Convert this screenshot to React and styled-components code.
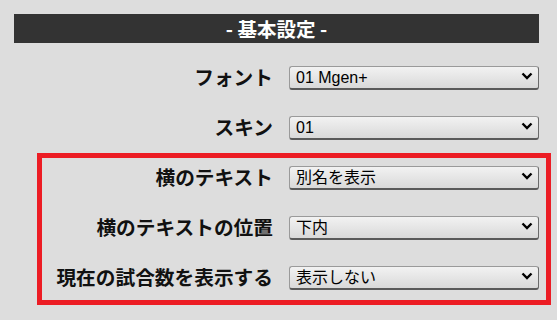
import React from "react";
import styled, { createGlobalStyle } from "styled-components";

const Global = createGlobalStyle`
  html, body { margin: 0; padding: 0; background: #dddddd; }
  body { font-family: "Noto Sans CJK JP", "Liberation Sans", sans-serif; }
`;

const Page = styled.div`
  padding: 14px;
  width: 525px;
`;

const Header = styled.div`
  height: 29px;
  background: #333333;
  color: #ffffff;
  font-weight: 700;
  font-size: 19.5px;
  line-height: 29px;
  text-align: center;
  font-family: "Noto Sans CJK JP", sans-serif;
`;

const Rows = styled.div`
  margin-top: 8px;
  display: flex;
  flex-direction: column;
`;

const Highlight = styled.div`
  position: relative;
  &::after {
    content: "";
    position: absolute;
    top: 2px;
    bottom: -4px;
    left: 23px;
    right: -12px;
    border: 5px solid #ec1c24;
    pointer-events: none;
  }
`;

const Row = styled.div`
  display: grid;
  grid-template-columns: 1fr 250px;
  column-gap: 16px;
  align-items: center;
  height: 50px;
`;

const Label = styled.label`
  text-align: right;
  font-weight: 700;
  font-size: 19.7px;
  color: #111;
  font-family: "Noto Sans CJK JP", sans-serif;
  white-space: nowrap;
`;

const SelectWrap = styled.div`
  position: relative;
  height: 24px;
`;

const Select = styled.select`
  appearance: none;
  -webkit-appearance: none;
  width: 100%;
  height: 24px;
  box-sizing: border-box;
  margin: 0;
  padding: 0 24px 0 6px;
  border: 1px solid #9a9a9a;
  border-bottom: 2px solid #5a5a5a;
  border-right-color: #6a6a6a;
  border-radius: 3px;
  background: linear-gradient(#f2f2f2, #d9d9d9);
  font-family: "Liberation Sans", "Noto Sans CJK JP", sans-serif;
  font-size: 16px;
  color: #000;
  outline: none;
`;

const Chevron = styled.svg`
  position: absolute;
  right: 6px;
  top: 8px;
  width: 12px;
  height: 8px;
  pointer-events: none;
`;

function Field({ label, value }) {
  return (
    <Row>
      <Label>{label}</Label>
      <SelectWrap>
        <Select defaultValue={value}>
          <option value={value}>{value}</option>
        </Select>
        <Chevron viewBox="0 0 12 8">
          <path d="M1.5 1.5 L6 6 L10.5 1.5" fill="none" stroke="#000" strokeWidth="2.4" />
        </Chevron>
      </SelectWrap>
    </Row>
  );
}

export default function App() {
  return (
    <>
      <Global />
      <Page>
        <Header>- 基本設定 -</Header>
        <Rows>
          <Field label="フォント" value="01 Mgen+" />
          <Field label="スキン" value="01" />
          <Highlight>
            <Field label="横のテキスト" value="別名を表示" />
            <Field label="横のテキストの位置" value="下内" />
            <Field label="現在の試合数を表示する" value="表示しない" />
          </Highlight>
        </Rows>
      </Page>
    </>
  );
}
